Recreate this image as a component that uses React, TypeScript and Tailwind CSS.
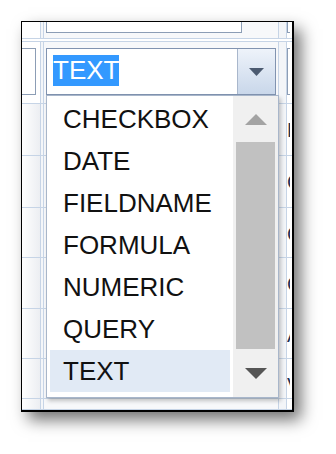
import React from "react";

const line = "border-[#c6d4e6]";

function Row({
  h,
  left,
  mid,
  gap,
  right,
  leftBg = "bg-gradient-to-r from-white to-[#eceef2]",
}: {
  h: string;
  left?: React.ReactNode;
  mid?: React.ReactNode;
  gap?: React.ReactNode;
  right?: React.ReactNode;
  leftBg?: string;
}) {
  return (
    <div className={`flex shrink-0 border-b ${line} ${h}`}>
      <div className={`w-[19px] shrink-0 border-r ${line} ${leftBg} overflow-hidden`}>{left}</div>
      <div className="w-[2px] shrink-0 bg-[#f4f6f9]" />
      <div className={`w-[236px] shrink-0 border-l border-r ${line} bg-[#f7f8fa] overflow-hidden`}>{mid}</div>
      <div className={`w-[8px] shrink-0 border-r ${line} bg-[#f3f5f8]`}>{gap}</div>
      <div className="w-[3px] shrink-0 overflow-hidden bg-white">{right}</div>
    </div>
  );
}

function Letter({ t }: { t: string }) {
  return (
    <div
      className="pl-0 pt-[14px] whitespace-nowrap text-[20px] leading-[24px] text-[#1e3052]"
      style={{ fontFamily: '"Liberation Sans", Arial, sans-serif' }}
    >
      {t}
    </div>
  );
}

const items = ["CHECKBOX", "DATE", "FIELDNAME", "FORMULA", "NUMERIC", "QUERY", "TEXT"];

export default function App() {
  return (
    <div
      className="w-[336px] h-[454px] bg-white pt-[21px] pl-[21px]"
      style={{ fontFamily: '"Liberation Sans", Arial, sans-serif' }}
    >
      <div className="relative w-[273px] h-[391px] border-l border-t border-r-2 border-b-2 border-black bg-white overflow-hidden shadow-[7px_8px_15px_rgba(0,0,0,0.55)] flex flex-col">
        {/* top row */}
        <Row
          h="h-[17px]"
          leftBg="bg-white"
          mid={
            <div className="ml-[2px] w-[196px] h-[11px] border-x border-b border-[#8c9db5] bg-white" />
          }
          right={<div className="h-[11px] border-l border-b border-[#8c9db5] bg-white" />}
        />
        <div className={`h-[3px] shrink-0 border-b ${line} bg-white`} />
        {/* combo row */}
        <Row
          h="h-[62px]"
          leftBg="bg-white"
          left={
            <div className="mt-[6px] w-[14px] h-[47px] border-y border-r border-[#8c9db5] bg-white" />
          }
          mid={
            <div className="mt-[6px] ml-[2px] w-[230px] h-[47px] border border-[#8193b0] flex bg-white">
              <div className="flex-1 border-r border-[#a9b7cc] pl-[6px] pt-[6px]">
                <span className="inline-block bg-[#3399ff] text-white text-[26px] leading-[31px]">TEXT</span>
              </div>
              <div className="w-[37px] bg-gradient-to-b from-[#eef3fa] to-[#c9d7ea] flex items-center justify-center">
                <svg width="15" height="8" viewBox="0 0 15 8">
                  <polygon points="0,0 15,0 7.5,8" fill="#4b5a70" />
                </svg>
              </div>
            </div>
          }
          right={<div className="mt-[6px] h-[47px] border-l border-y border-[#8c9db5] bg-white" />}
        />
        <Row h="h-[52px]" right={<Letter t="Edit" />} />
        <Row h="h-[52px]" right={<Letter t="Char" />} />
        <Row h="h-[50px]" right={<Letter t="Char" />} />
        <Row h="h-[51px]" right={<Letter t="Char" />} />
        <Row h="h-[50px]" right={<Letter t="Array" />} />
        <Row h="h-[40px]" right={<Letter t="Var" />} />
        <Row h="h-[11px]" />

        {/* dropdown list overlay */}
        <div className="absolute left-[24px] top-[73px] w-[233px] h-[303px] border border-[#a8b6ca] bg-white flex shadow-[2px_3px_4px_rgba(0,0,0,0.22)]">
          <div className="flex-1 pl-[3px] pr-[3px] pt-[2px]">
            {items.map((it) => (
              <div
                key={it}
                className={`h-[42px] pl-[13px] text-[26px] leading-[42px] text-[#111111] whitespace-nowrap ${
                  it === "TEXT" ? "bg-[#e1eaf5]" : ""
                }`}
              >
                {it}
              </div>
            ))}
          </div>
          <div className="w-[45px] bg-[#f0f0f0] flex flex-col">
            <div className="h-[42px] flex items-center justify-center pt-[4px]">
              <svg width="22" height="11" viewBox="0 0 22 11">
                <polygon points="11,0 22,11 0,11" fill="#a3a3a3" />
              </svg>
            </div>
            <div className="mt-[4px] mx-[3px] h-[207px] bg-[#c1c1c1]" />
            <div className="flex-1 flex items-center justify-center">
              <svg width="22" height="11" viewBox="0 0 22 11">
                <polygon points="0,0 22,0 11,11" fill="#555555" />
              </svg>
            </div>
          </div>
        </div>
      </div>
    </div>
  );
}
